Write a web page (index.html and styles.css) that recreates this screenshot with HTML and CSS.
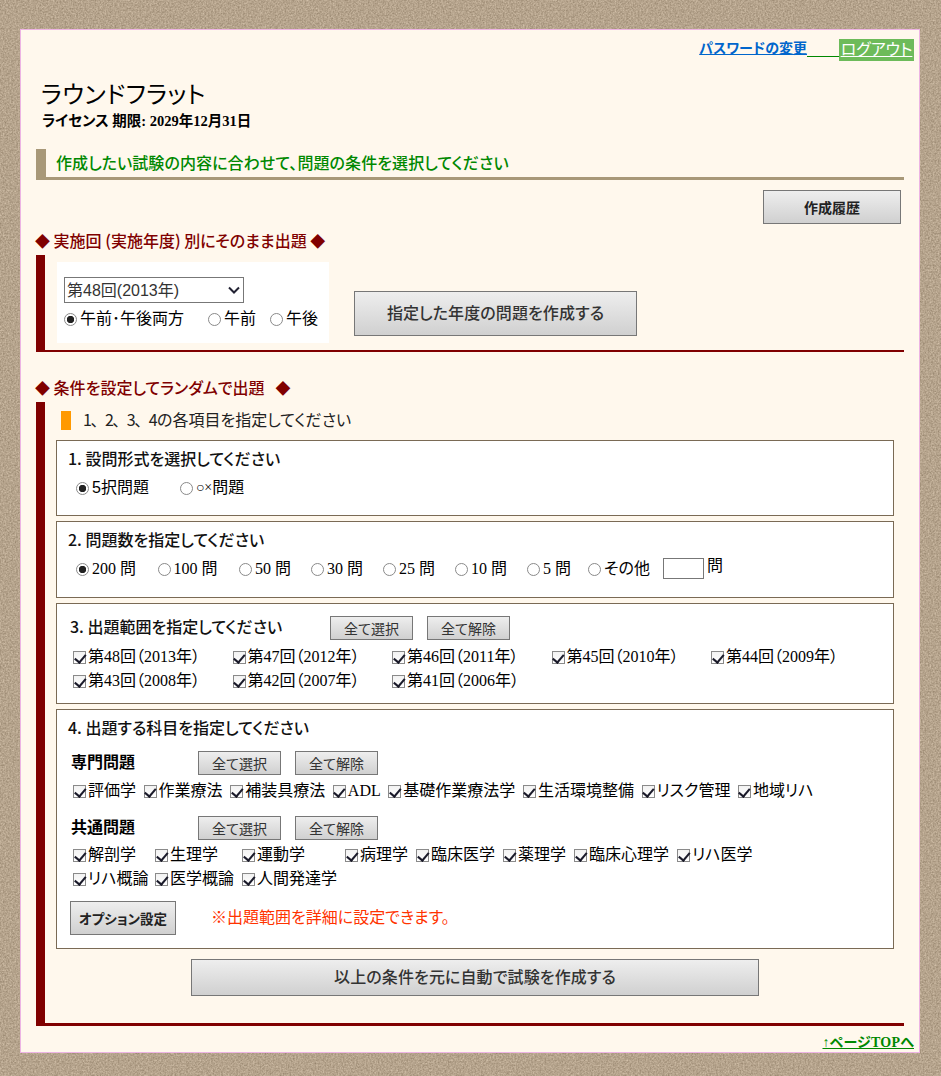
FILE: index.html
```html
<!DOCTYPE html>
<html lang="ja">
<head>
<meta charset="utf-8">
<title>ラウンドフラット</title>
<link rel="stylesheet" href="styles.css">
</head>
<body>
<svg class="texture" aria-hidden="true"><filter id="grain" color-interpolation-filters="sRGB"><feTurbulence type="fractalNoise" baseFrequency="0.6" numOctaves="3" seed="4"/><feColorMatrix values="0.28 0 0 0 0.57  0.28 0 0 0 0.5  0.28 0 0 0 0.41  0 0 0 0 1"/></filter><rect width="100%" height="100%" filter="url(#grain)"/></svg>
<div class="page">
  <div class="toplinks"><a class="pw" href="#">パスワードの変更</a><a class="gap" href="#"></a><a class="logout" href="#">ログアウト</a></div>
  <h1 class="title">ラウンドフラット</h1>
  <p class="license">ライセンス 期限: 2029年12月31日</p>
  <h2 class="lead">作成したい試験の内容に合わせて、問題の条件を選択してください</h2>
  <div class="history-row"><button class="btn btn-history">作成履歴</button></div>

  <h3 class="sec-title"><span class="dia">◆</span> 実施回 (実施年度) 別にそのまま出題 <span class="dia">◆</span></h3>
  <section class="sec sec-year">
    <div class="year-panel">
      <select class="year-select"><option>第48回(2013年)</option></select>
      <div class="year-radios">
        <label class="opt g24"><input type="radio" name="t" checked>午前･午後両方</label>
        <label class="opt g14"><input type="radio" name="t">午前</label>
        <label class="opt"><input type="radio" name="t">午後</label>
      </div>
    </div>
    <button class="btn btn-year">指定した年度の問題を作成する</button>
  </section>

  <h3 class="sec-title sec-title2"><span class="dia">◆</span> 条件を設定してランダムで出題 &nbsp;&nbsp;<span class="dia">◆</span></h3>
  <section class="sec sec-random">
    <div class="instr"><span class="nums">1、2、3、4</span>の各項目を指定してください</div>

    <div class="box box1">
      <h4 class="q">1. 設問形式を選択してください</h4>
      <div class="radios r1">
        <label class="opt sans g31"><input type="radio" name="a" checked>5択問題</label>
        <label class="opt"><input type="radio" name="a"><span class="mark">○×</span>問題</label>
      </div>
    </div>

    <div class="box box2">
      <h4 class="q">2. 問題数を指定してください</h4>
      <div class="radios r2">
        <label class="opt wide"><input type="radio" name="b" checked>200 問</label>
        <label class="opt wide"><input type="radio" name="b">100 問</label>
        <label class="opt"><input type="radio" name="b">50 問</label>
        <label class="opt"><input type="radio" name="b">30 問</label>
        <label class="opt"><input type="radio" name="b">25 問</label>
        <label class="opt"><input type="radio" name="b">10 問</label>
        <label class="opt tight"><input type="radio" name="b">5 問</label>
        <label class="opt"><input type="radio" name="b">その他</label>
        <span class="other"><input class="num" type="text"><span class="unit">問</span></span>
      </div>
    </div>

    <div class="box box3">
      <div class="q-row"><h4 class="q q3">3. 出題範囲を指定してください</h4><button class="btn btn-sm">全て選択</button><button class="btn btn-sm">全て解除</button></div>
      <div class="years">
        <label class="chk"><input type="checkbox" checked>第48回（2013年）</label>
        <label class="chk"><input type="checkbox" checked>第47回（2012年）</label>
        <label class="chk"><input type="checkbox" checked>第46回（2011年）</label>
        <label class="chk"><input type="checkbox" checked>第45回（2010年）</label>
        <label class="chk"><input type="checkbox" checked>第44回（2009年）</label>
        <label class="chk"><input type="checkbox" checked>第43回（2008年）</label>
        <label class="chk"><input type="checkbox" checked>第42回（2007年）</label>
        <label class="chk"><input type="checkbox" checked>第41回（2006年）</label>
      </div>
    </div>

    <div class="box box4">
      <h4 class="q">4. 出題する科目を指定してください</h4>
      <div class="sub-head"><strong class="sub-name">専門問題</strong><button class="btn btn-sm">全て選択</button><button class="btn btn-sm">全て解除</button></div>
      <div class="subjects">
        <label class="chk"><input type="checkbox" checked>評価学</label>
        <label class="chk"><input type="checkbox" checked>作業療法</label>
        <label class="chk"><input type="checkbox" checked>補装具療法</label>
        <label class="chk"><input type="checkbox" checked>ADL</label>
        <label class="chk"><input type="checkbox" checked>基礎作業療法学</label>
        <label class="chk"><input type="checkbox" checked>生活環境整備</label>
        <label class="chk"><input type="checkbox" checked>リスク管理</label>
        <label class="chk"><input type="checkbox" checked>地域リハ</label>
      </div>
      <div class="sub-head sub-head2"><strong class="sub-name">共通問題</strong><button class="btn btn-sm">全て選択</button><button class="btn btn-sm">全て解除</button></div>
      <div class="subjects common">
        <label class="chk c1"><input type="checkbox" checked>解剖学</label>
        <label class="chk c2"><input type="checkbox" checked>生理学</label>
        <label class="chk c3"><input type="checkbox" checked>運動学</label>
        <label class="chk"><input type="checkbox" checked>病理学</label>
        <label class="chk"><input type="checkbox" checked>臨床医学</label>
        <label class="chk"><input type="checkbox" checked>薬理学</label>
        <label class="chk"><input type="checkbox" checked>臨床心理学</label>
        <label class="chk"><input type="checkbox" checked>リハ医学</label>
      </div>
      <div class="subjects common row2">
        <label class="chk c1"><input type="checkbox" checked>リハ概論</label>
        <label class="chk c2"><input type="checkbox" checked>医学概論</label>
        <label class="chk c3"><input type="checkbox" checked>人間発達学</label>
      </div>
      <div class="option-row"><button class="btn btn-option">オプション設定</button><span class="note">※出題範囲を詳細に設定できます。</span></div>
    </div>

    <div class="submit-row"><button class="btn btn-submit">以上の条件を元に自動で試験を作成する</button></div>
  </section>

  <div class="pagetop"><a href="#">↑ページTOPへ</a></div>
</div>
</body>
</html>
```
FILE: styles.css
```css
* { box-sizing: border-box; }
html, body { margin: 0; padding: 0; }
body {
  height: 1076px;
  overflow: hidden;
  padding: 29px 21px 0 20px;
  background: #b5a48c;
  color: #000;
  font-family: "Liberation Serif", "Noto Sans CJK JP", serif;
  font-size: 16px;
  font-feature-settings: "palt";
}
.texture { position: fixed; left: 0; top: 0; width: 100%; height: 100%; z-index: -1; }
.page {
  height: 1024px;
  padding: 0 15px;
  background: #fff8ed;
  border: 1px solid #edb4e4;
}
h1, h2, h3, h4, p { margin: 0; }

.toplinks { display: flex; justify-content: flex-end; align-items: flex-start; height: 32px; margin-right: -10px; padding-top: 9px; line-height: 22px; font-family: "Noto Sans CJK JP", sans-serif; font-weight: 700; font-size: 14px; }
.pw { color: #0066cc; height: 18px; line-height: 16px; text-decoration-thickness: 1px; }
.gap { display: block; width: 32px; height: 18px; border-bottom: 1px solid #008800; }
.logout { display: block; width: 75px; height: 22px; background: #6dbb5a; color: #fff; font-weight: 400; font-size: 16px; line-height: 19px; text-align: center; text-decoration-thickness: 1px; }

.title { margin: 16px 0 0 5px; font-family: "Noto Sans CJK JP", sans-serif; font-size: 24px; font-weight: 400; letter-spacing: 0.5px; line-height: 30px; }
.license { margin: 3px 0 0 6px; font-weight: 700; font-size: 14.5px; line-height: 20px; }

.lead { margin-top: 18px; height: 31px; padding-left: 10px; border-left: 10px solid #a89878; border-bottom: 3px solid #a89878; color: #008800; font-family: "Noto Sans CJK JP", sans-serif; font-size: 16px; font-weight: 500; letter-spacing: 0.08px; line-height: 26px; }

.history-row { display: flex; justify-content: flex-end; margin-top: 10px; padding-right: 3px; }
.btn { background: linear-gradient(#eeeeee, #d0d0d0); border: 1px solid #777; color: #222; font-family: "Liberation Serif", "Noto Sans CJK JP", serif; font-feature-settings: "palt"; padding: 0; cursor: pointer; }
.btn-history { width: 138px; height: 34px; font-size: 14px; font-weight: 700; }

.sec-title { margin-top: 6px; margin-left: -1px; height: 25px; color: #800000; font-family: "Noto Sans CJK JP", sans-serif; font-size: 16px; font-weight: 500; line-height: 21px; }
.sec-title2 { margin-top: 23px; height: 27px; line-height: 24px; }
.dia { font-size: 15px; }
.sec { border-left: 9px solid #800000; border-bottom: 2px solid #800000; }
.sec-year { display: flex; height: 97px; padding: 7px 0 0 12px; }
.year-panel { width: 272px; height: 81px; padding: 15px 7px 0; background: #fff; }
.year-select {
  display: block;
  appearance: none;
  width: 180px;
  height: 26px;
  padding: 0 0 0 2px;
  border: 1px solid #777;
  color: #333;
  font-family: "Liberation Sans", "Noto Sans CJK JP", sans-serif;
  font-size: 16px;
  background: #fff url("data:image/svg+xml,%3Csvg xmlns='http://www.w3.org/2000/svg' width='12' height='8'%3E%3Cpath d='M1 1.5l5 5 5-5' fill='none' stroke='%23223' stroke-width='2'/%3E%3C/svg%3E") no-repeat right 3px center;
}
.year-radios { display: flex; margin-top: 4px; }
.opt { display: inline-flex; align-items: center; line-height: 24px; }
.opt input { appearance: none; width: 13px; height: 13px; margin: 0 3px 0 0; border: 1px solid #8a8a8a; border-radius: 50%; background: #fff; }
.opt input:checked { background: radial-gradient(circle, #222 0 3.4px, #fff 4px); }
.g24 { margin-right: 24px; }
.g14 { margin-right: 14px; }
.g31 { margin-right: 31px; }
.btn-year { width: 283px; height: 45px; margin: 29px 0 0 25px; padding-bottom: 3px; font-family: "Noto Sans CJK JP", sans-serif; font-size: 16px; font-weight: 500; letter-spacing: 0.1px; color: #333; }

.sec-random { height: 624px; padding: 0 10px 0 11px; border-bottom-width: 3px; }
.instr { position: relative; height: 38px; padding: 5px 0 0 27px; font-family: "Noto Sans CJK JP", sans-serif; font-size: 16px; line-height: 24px; color: #222; }
.instr::before { content: ""; position: absolute; left: 5px; top: 9px; width: 10px; height: 19px; background: #ff9900; }
.nums { font-feature-settings: normal; letter-spacing: -1.5px; margin-right: 1px; }

.box { background: #fff; border: 1px solid #7a6a55; margin-bottom: 5px; padding: 0 11px; }
.box1 { height: 76px; padding-top: 5px; }
.box2 { height: 77px; padding-top: 5px; }
.box3 { height: 101px; padding-top: 12px; }
.box4 { height: 240px; margin-bottom: 10px; padding-top: 5px; }
.q { font-family: "Noto Sans CJK JP", sans-serif; font-size: 16px; font-weight: 500; line-height: 24px; color: #111; }
.q3 { width: 260px; margin-left: 2px; line-height: 20px; }
.radios { display: flex; margin: 6px 0 0 8px; }
.r2 { gap: 20px; }
.wide { margin-right: 1.5px; }
.tight { margin-right: -3px; }
.sans { font-family: "Liberation Sans", "Noto Sans CJK JP", sans-serif; }
.mark { font-size: 14px; }
.other { display: inline-flex; align-items: flex-start; margin-left: -7px; }
.num { width: 41px; height: 21px; margin: 1px 3px 0 0; border: 1px solid #777; background: #fff; padding: 0; }
.unit { line-height: 18px; }

.q-row { display: flex; align-items: flex-start; }
.btn-sm { width: 83px; height: 24px; margin-right: 14px; font-size: 14px; color: #333; }
.years { display: grid; grid-template-columns: repeat(5, 159.5px); margin: 5px 0 0 5px; }
.chk { display: inline-flex; align-items: center; line-height: 24px; white-space: nowrap; }
.chk input { appearance: none; position: relative; flex: none; width: 13px; height: 13px; margin: 0 2px 0 0; border: 1px solid #8a8a8a; background: linear-gradient(#f2f2f2, #fff); }
.chk input:checked::after { content: ""; position: absolute; left: 2.5px; top: 0; width: 5px; height: 8.5px; border: solid #1a1a2a; border-width: 0 2.6px 2.6px 0; transform: rotate(40deg); }

.sub-head { display: flex; align-items: flex-start; margin: 12px 0 0 3px; height: 24px; }
.sub-head2 { margin-top: 13px; }
.sub-name { width: 127px; font-family: "Noto Sans CJK JP", sans-serif; font-size: 16px; font-weight: 700; line-height: 20px; }
.subjects { display: flex; gap: 7.6px; margin: 4px 0 0 5px; height: 24px; }
.common { gap: 8px; margin-top: 3px; }
.common.row2 { margin-top: 0; }
.c1 { width: 82px; margin-right: -8px; }
.c2 { width: 87px; margin-right: -8px; }
.c3 { width: 103px; margin-right: -8px; }
.option-row { display: flex; align-items: center; margin: 10px 0 0 2px; }
.btn-option { width: 106px; height: 34px; font-family: "Noto Sans CJK JP", sans-serif; font-size: 13.5px; font-weight: 700; }
.note { margin: 0 0 4px 35px; color: #ff3300; font-size: 16px; }

.submit-row { display: flex; justify-content: center; }
.btn-submit { width: 568px; height: 37px; padding-bottom: 3px; font-family: "Noto Sans CJK JP", sans-serif; font-size: 16px; font-weight: 500; letter-spacing: 0.1px; color: #333; }

.pagetop { display: flex; justify-content: flex-end; margin: 9px -10px 0 0; font-size: 14px; font-weight: 700; letter-spacing: 0.2px; line-height: 16px; }
.pagetop a { color: #008800; }
```
